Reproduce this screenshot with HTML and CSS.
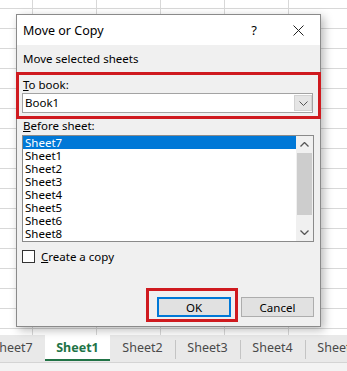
FILE: index.html
```html
<!DOCTYPE html>
<html>
<head>
<meta charset="utf-8">
<link rel="stylesheet" href="styles.css">
</head>
<body>
<div class="app">
  <div class="sheet-area"></div>
  <div class="tabbar">
    <div class="tabs">
      <div class="tab">Sheet7</div>
      <div class="tab active">Sheet1</div>
      <div class="tab">Sheet2</div>
      <div class="tab sep">Sheet3</div>
      <div class="tab sep">Sheet4</div>
      <div class="tab sep">Sheet5</div>
    </div>
  </div>
  <div class="statusband"></div>

  <div class="dialog">
    <div class="titlebar">
      <span class="title">Move or Copy</span>
      <span class="help">?</span>
      <span class="close">
        <svg width="11" height="11" viewBox="0 0 11 11"><path d="M0.5 0.5 L10.5 10.5 M10.5 0.5 L0.5 10.5" stroke="#222" stroke-width="1" fill="none"/></svg>
      </span>
    </div>
    <div class="dlg-body">
      <div class="caption">Move selected sheets</div>
      <div class="highlight book">
        <div class="label"><u>T</u>o book:</div>
        <div class="combo">
          <span class="combo-text">Book1</span>
          <span class="combo-btn">
            <svg width="9" height="5" viewBox="0 0 9 5"><path d="M0.5 0.5 L4.5 4.5 L8.5 0.5" stroke="#555" stroke-width="1" fill="none"/></svg>
          </span>
        </div>
      </div>
      <div class="label before"><u>B</u>efore sheet:</div>
      <div class="listbox">
        <div class="items">
          <div class="item selected">Sheet7</div>
          <div class="item">Sheet1</div>
          <div class="item">Sheet2</div>
          <div class="item">Sheet3</div>
          <div class="item">Sheet4</div>
          <div class="item">Sheet5</div>
          <div class="item">Sheet6</div>
          <div class="item">Sheet8</div>
        </div>
        <div class="scrollbar">
          <div class="arrow">
            <svg width="9" height="5" viewBox="0 0 9 5"><path d="M0.5 4.5 L4.5 0.5 L8.5 4.5" stroke="#555" stroke-width="1.3" fill="none"/></svg>
          </div>
          <div class="track"><div class="thumb"></div></div>
          <div class="arrow">
            <svg width="9" height="5" viewBox="0 0 9 5"><path d="M0.5 0.5 L4.5 4.5 L8.5 0.5" stroke="#555" stroke-width="1.3" fill="none"/></svg>
          </div>
        </div>
      </div>
      <div class="check">
        <span class="box"></span>
        <span class="check-label"><u>C</u>reate a copy</span>
      </div>
      <div class="buttons">
        <div class="highlight okwrap"><div class="btn default">OK</div></div>
        <div class="btn cancel">Cancel</div>
      </div>
    </div>
  </div>
</div>
</body>
</html>
```

FILE: styles.css
```css
* { box-sizing: border-box; }
html, body { margin: 0; padding: 0; }
body {
  width: 347px;
  height: 371px;
  overflow: hidden;
  font-family: "Noto Sans", "Open Sans", sans-serif;
  color: #000;
}
.app {
  position: relative;
  width: 347px;
  height: 371px;
  display: flex;
  flex-direction: column;
  background: #fff;
}
.sheet-area {
  height: 335px;
  background-color: #fff;
  background-image:
    linear-gradient(to right, #d8d8d8 1px, transparent 1px),
    linear-gradient(to bottom, #d8d8d8 1px, transparent 1px);
  background-size: 64px 20px;
  background-position: 32px 8px;
}
.tabbar {
  height: 28px;
  background: #e9e9e9;
  border-bottom: 1px solid #d4d4d4;
  overflow: hidden;
}
.tabs {
  display: flex;
  margin-left: -20px;
  height: 100%;
}
.tab {
  flex: 0 0 65px;
  height: 100%;
  display: flex;
  align-items: center;
  justify-content: center;
  font-size: 12.5px;
  color: #4a4a4a;
  position: relative;
  padding-bottom: 2px;
}
.tab.sep::before {
  content: "";
  position: absolute;
  left: 0;
  top: 5px;
  height: 19px;
  border-left: 1px solid #c4c4c4;
}
.tab.active {
  background: #fff;
  color: #217346;
  font-weight: 700;
  border-bottom: 2px solid #217346;
  height: 26px;
  padding-bottom: 0;
}
.statusband {
  flex: 1;
  background: #f3f3f3;
}

/* dialog */
.dialog {
  position: absolute;
  left: 16px;
  top: 14px;
  width: 305px;
  height: 313px;
  border: 1px solid #8a8a8a;
  background: #f0f0f0;
  box-shadow: 3px 3px 9px rgba(0,0,0,0.28);
  display: flex;
  flex-direction: column;
}
.titlebar {
  height: 30px;
  background: #fff;
  display: flex;
  align-items: center;
  padding-left: 6px;
  font-size: 12.5px;
}
.help {
  margin-left: auto;
  width: 14px;
  text-align: center;
  font-size: 13px;
}
.close {
  margin-left: 32px;
  margin-right: 16px;
  width: 11px;
  height: 11px;
  display: flex;
}
.dlg-body {
  flex: 1;
  font-size: 11.5px;
  padding-top: 7px;
}
.caption {
  line-height: 14px;
  padding-left: 6px;
}
.highlight {
  border: 3px solid #cf1a1f;
}
.book {
  margin: 6px -1px 0 -1px;
  padding: 3px 0 3px 0;
}
.label {
  line-height: 14px;
  padding-left: 4px;
}
.combo {
  margin: 1px 0 0 3px;
  width: 291px;
  height: 20px;
  border: 1px solid #a3a3a3;
  background: #fff;
  display: flex;
  align-items: stretch;
}
.combo-text {
  flex: 1;
  padding-left: 2px;
  line-height: 18px;
}
.combo-btn {
  width: 18px;
  margin: 1px 0;
  background: #e5e5e5;
  border: 1px solid #d2d2d2;
  display: flex;
  align-items: center;
  justify-content: center;
}
.label.before {
  padding-left: 6px;
}
.listbox {
  margin: 2px 0 0 5px;
  width: 292px;
  height: 107px;
  border: 1px solid #8a8a8a;
  background: #fff;
  display: flex;
}
.items {
  flex: 1;
}
.item {
  height: 13px;
  line-height: 13px;
  padding-left: 2px;
  font-size: 11.5px;
}
.item.selected {
  background: #0078d7;
  color: #fff;
}
.scrollbar {
  width: 17px;
  background: #f0f0f0;
  display: flex;
  flex-direction: column;
}
.arrow {
  height: 17px;
  display: flex;
  align-items: center;
  justify-content: center;
}
.track {
  flex: 1;
  padding: 0 1px;
}
.thumb {
  height: 62px;
  background: #cdcdcd;
}
.check {
  display: flex;
  align-items: center;
  margin: 8px 0 0 5px;
  height: 13px;
}
.box {
  width: 13px;
  height: 13px;
  border: 1px solid #333;
  background: #fff;
}
.check-label {
  margin-left: 6px;
  line-height: 13px;
}
.buttons {
  display: flex;
  justify-content: flex-end;
  align-items: flex-start;
  margin-top: 25px;
  padding-right: 6px;
}
.okwrap {
  padding: 6px 4px 2px 8px;
}
.btn {
  width: 74px;
  height: 20px;
  background: #e1e1e1;
  border: 1px solid #adadad;
  display: flex;
  align-items: center;
  justify-content: center;
  font-size: 11.5px;
}
.btn.default {
  border: 2px solid #0078d7;
}
.btn.cancel {
  margin-left: 3px;
  margin-top: 9px;
  width: 73px;
}
```
